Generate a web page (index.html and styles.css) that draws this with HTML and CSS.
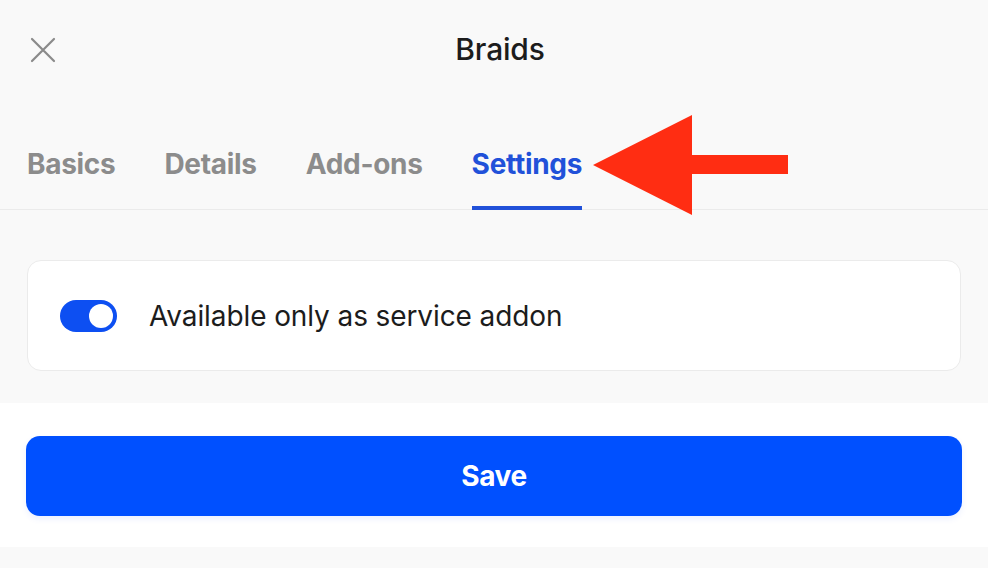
FILE: index.html
```html
<!DOCTYPE html>
<html>
<head>
  <meta charset="UTF-8">
  <link rel="stylesheet" href="styles.css">
</head>
<body>
  <div class="sheet">
    <div class="topbar">
      <button class="close-btn" aria-label="Close">
        <svg width="26" height="26" viewBox="0 0 26 26">
          <path d="M2 2 L24 24 M24 2 L2 24" stroke="#8a8a8a" stroke-width="2.2" stroke-linecap="round"/>
        </svg>
      </button>
      <h1 class="title">Braids</h1>
      <span></span>
    </div>

    <div class="tabs">
      <div class="tab">Basics</div>
      <div class="tab">Details</div>
      <div class="tab">Add-ons</div>
      <div class="tab active">Settings</div>
    </div>

    <!-- callout pointing at the active tab -->
    <svg class="callout" width="196" height="100" viewBox="0 0 196 100">
      <polygon points="0,50 99,0 99,40 195,40 195,59 99,59 99,100" fill="#ff2d12"/>
    </svg>

    <div class="content">
      <div class="card">
        <label class="switch">
          <input type="checkbox" checked>
          <span class="slider"></span>
        </label>
        <span class="card-label">Available only as service addon</span>
      </div>
    </div>

    <div class="footer">
      <button class="save-btn">Save</button>
    </div>
  </div>
</body>
</html>
```

FILE: styles.css
```css
body {
  margin: 0;
  background: #f9f9f9;
  font-family: Inter, "Noto Sans", sans-serif;
  color: #1a1a1a;
}
.sheet {
  position: relative;
  width: 988px;
  height: 568px;
}
.topbar {
  height: 100px;
  display: grid;
  grid-template-columns: 1fr auto 1fr;
  align-items: center;
  padding: 0 30px;
  box-sizing: border-box;
}
.close-btn {
  width: 26px;
  height: 26px;
  padding: 0;
  border: none;
  background: none;
  display: flex;
}
.title {
  margin: 0 0 0 12px;
  font-size: 30px;
  font-weight: 500;
  letter-spacing: -0.2px;
  color: #1c1c1c;
  position: relative;
  top: -1px;
}
.tabs {
  display: flex;
  gap: 49px;
  padding: 0 27px;
  border-bottom: 1px solid #ebebeb;
}
.tab {
  font-size: 28px;
  font-weight: 700;
  letter-spacing: -0.3px;
  line-height: 32px;
  color: #8c8c8c;
  padding: 48px 0 26px;
  border-bottom: 4px solid transparent;
  margin-bottom: -1px;
}
.tab.active {
  color: #2151d9;
  border-bottom-color: #2151d9;
}
.callout {
  position: absolute;
  left: 593px;
  top: 115px;
}
.content {
  padding: 50px 27px 32px;
}
.card {
  height: 111px;
  box-sizing: border-box;
  background: #ffffff;
  border: 1px solid #ebebeb;
  border-radius: 14px;
  display: flex;
  align-items: center;
  gap: 32px;
  padding: 0 32px;
}
.switch {
  position: relative;
  display: inline-block;
  width: 57px;
  height: 32px;
}
.switch input {
  display: none;
}
.slider {
  position: absolute;
  inset: 0;
  background-color: #ccc;
  border-radius: 16px;
}
.slider:before {
  position: absolute;
  content: "";
  width: 24px;
  height: 24px;
  left: 4px;
  top: 4px;
  background: #fff;
  border-radius: 50%;
}
input:checked + .slider {
  background-color: #0d4ff2;
}
input:checked + .slider:before {
  transform: translateX(25px);
}
.card-label {
  font-size: 28px;
  letter-spacing: -0.1px;
  color: #1c1c1c;
}
.footer {
  background: #ffffff;
  padding: 33px 26px 31px;
}
.save-btn {
  display: block;
  width: 100%;
  height: 80px;
  border: none;
  border-radius: 14px;
  background: #0050ff;
  color: #ffffff;
  font-family: Inter, "Noto Sans", sans-serif;
  font-size: 28px;
  font-weight: 700;
  letter-spacing: -0.4px;
  box-shadow: 0 3px 6px rgba(0, 80, 255, 0.08);
}
```
